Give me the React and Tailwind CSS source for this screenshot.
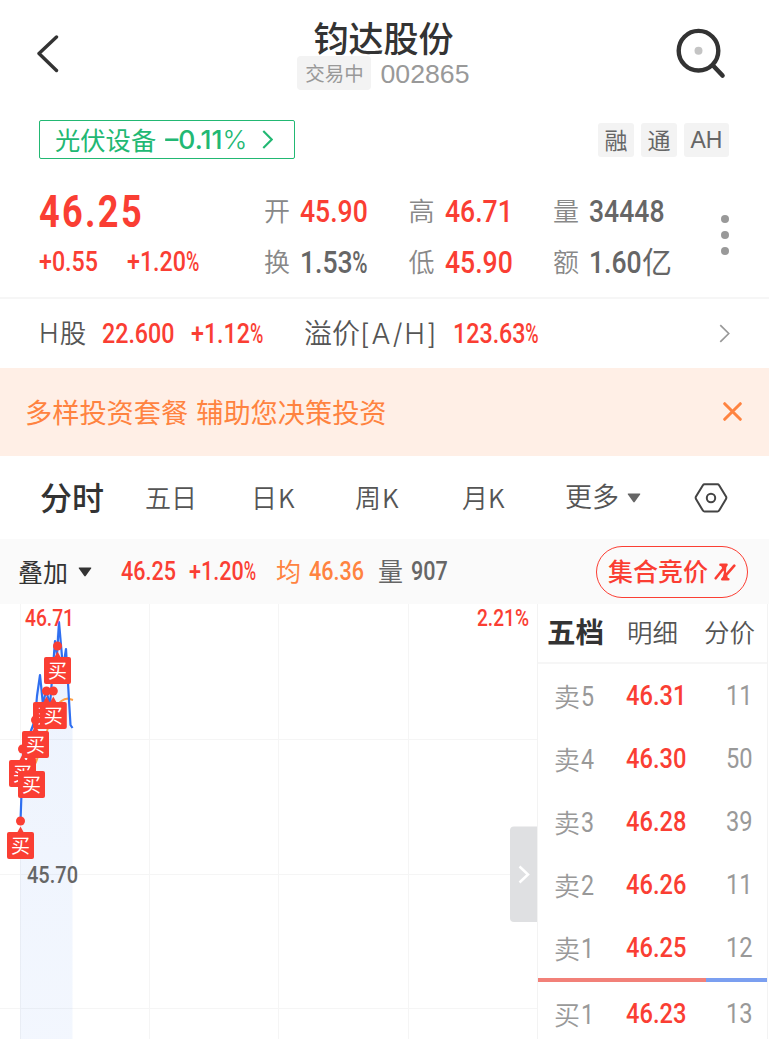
const SANS = "font-['Noto_Sans_CJK_SC',sans-serif]";

const stats = [
  [
    { label: "开", value: "45.90", red: true },
    { label: "换", value: "1.53%" },
  ],
  [
    { label: "高", value: "46.71", red: true },
    { label: "低", value: "45.90", red: true },
  ],
  [
    { label: "量", value: "34448" },
    { label: "额", value: "1.60", unit: "亿" },
  ],
];

const asks = [
  { label: "卖5", price: "46.31", volume: "11" },
  { label: "卖4", price: "46.30", volume: "50" },
  { label: "卖3", price: "46.28", volume: "39" },
  { label: "卖2", price: "46.26", volume: "11" },
  { label: "卖1", price: "46.25", volume: "12" },
];

const bids = [{ label: "买1", price: "46.23", volume: "13" }];

// x / y of the trade dot, the badge hangs below it
const trades = [
  { x: 57.5, y: 646 },
  { x: 46.5, y: 691 },
  { x: 53.3, y: 691 },
  { x: 22.5, y: 749 },
  { x: 35.5, y: 720 },
  { x: 31.5, y: 760 },
  { x: 20.5, y: 821 },
];

// Narrow figures: the glyphs are squeezed inside a box of fixed width
const Num = ({ className, children }) => {
  const percent = children.endsWith("%");
  return (
    <span className={`block shrink-0 whitespace-nowrap font-[Roboto,sans-serif] ${className}`}>
      <span className="inline-block origin-left scale-x-[.83]">
        {percent ? children.slice(0, -1) : children}
        {percent && <span className="inline-block origin-left scale-x-[.78]">%</span>}
      </span>
    </span>
  );
};

const Chevron = ({ className }) => (
  <svg className={className} viewBox="0 0 10 18" fill="none" stroke="currentColor">
    <path d="M1 1l8 8-8 8" />
  </svg>
);

const Caret = ({ className }) => (
  <svg className={className} viewBox="0 0 14 10" fill="currentColor">
    <path d="M1.3.5h11.4q1 0 .4.9L7.7 9q-.7.8-1.4 0L.9 1.4Q.3.5 1.3.5z" />
  </svg>
);

const Header = () => (
  <header className="flex h-[100px] items-start justify-between pl-[37px] pr-[42px]">
    <svg className="mt-[34px] h-10 w-[22px]" viewBox="0 0 22 40" fill="none" stroke="#333" strokeWidth="3.4" strokeLinecap="round" strokeLinejoin="round">
      <path d="M19.5 3L2 19.5 19.5 36.5" />
    </svg>
    <div className="ml-[33px] flex flex-col items-center">
      <h1 className="mt-[17px] h-10 text-[35px] font-medium leading-[40px] text-[#333]">钧达股份</h1>
      <div className="-mt-px flex h-[34px] items-center">
        <span className="h-[34px] w-[74px] rounded bg-[#f3f3f3] text-center text-[19.5px] leading-[33px] text-[#999]">交易中</span>
        <span className="ml-[9px] pt-0.5 font-['Liberation_Sans',sans-serif] text-[26.7px] text-[#999]">002865</span>
      </div>
    </div>
    <svg className="mt-7 h-[52px] w-[52px]" viewBox="0 0 52 52" fill="none">
      <circle cx="23.5" cy="22.7" r="19.8" stroke="#333" strokeWidth="4.4" />
      <circle cx="23.5" cy="22.7" r="4" fill="#c4c4c4" />
      <path d="M38 37.5L47.5 47.5" stroke="#333" strokeWidth="4.6" strokeLinecap="round" />
    </svg>
  </header>
);

const Tags = () => (
  <div className="flex h-[82px] items-start justify-between pl-[39px] pr-10 pt-5">
    <div className="flex h-[39px] w-[256px] items-center rounded-[2px] border border-[#22b873] pl-[15px] text-[#22b873]">
      <span className="w-[110px] whitespace-nowrap text-[25.3px] leading-[37px]">光伏设备</span>
      <span className="w-[97px] whitespace-nowrap font-[Inter,sans-serif] text-[26px] font-medium leading-[37px]">
        <span className="inline-block origin-left scale-x-[1.02]">–0.11<span className="font-light">%</span></span>
      </span>
      <Chevron className="h-[19px] w-[11px] stroke-2" />
    </div>
    <div className="mt-[3px] flex gap-[7px] text-[23px] leading-[33px] text-[#666]">
      <span className="h-[34px] w-9 rounded-[3px] bg-[#f3f3f3] text-center">融</span>
      <span className="h-[34px] w-9 rounded-[3px] bg-[#f3f3f3] text-center">通</span>
      <span className="h-[34px] w-[45px] rounded-[3px] bg-[#f3f3f3] text-center font-['Liberation_Sans',sans-serif] leading-[35px]">AH</span>
    </div>
  </div>
);

const Quote = () => (
  <section className="flex h-[117px] border-b-2 border-[#f6f6f6] pl-[39px] text-[#fa3e33]">
    <div className="w-[225px]">
      <Num className="mt-[8px] h-[46px] text-[43.5px] font-bold leading-[46px] tracking-[2.8px]">46.25</Num>
      <div className="mt-[9px] flex text-[28px] font-medium leading-[34px]">
        <Num className="w-[88px]">+0.55</Num>
        <Num className="w-20">+1.20%</Num>
      </div>
    </div>
    {stats.map((column, i) => (
      <div className="w-[144.5px] pt-[9px]" key={i}>
        {column.map((item) => (
          <div className="mb-[11px] flex h-10 items-center" key={item.label}>
            <span className="w-[36px] pb-[3px] text-[26px] font-[350] leading-[37px] text-[#888]">{item.label}</span>
            <Num className={`text-[32px] font-medium leading-10 ${item.red ? "" : "text-[#666]"} ${item.unit ? "w-[53px]" : ""}`}>
              {item.value}
            </Num>
            {item.unit && <span className="pb-[3px] text-[30px] leading-[37px] text-[#666]">{item.unit}</span>}
          </div>
        ))}
      </div>
    ))}
    <div className="ml-[23px] mt-[33px] flex flex-col gap-2">
      <i className="size-2 rounded-full bg-[#999]" />
      <i className="size-2 rounded-full bg-[#999]" />
      <i className="size-2 rounded-full bg-[#999]" />
    </div>
  </section>
);

const HShare = () => (
  <section className="flex h-[69px] items-center pl-[39px] text-[28px] font-medium text-[#fa3e33]">
    <span className="w-[63px] whitespace-nowrap pb-0.5 text-[26.5px] font-[350] text-[#555]">
      <span className="mr-px font-[Inter,sans-serif] font-light">H</span>股
    </span>
    <Num className="w-[89px]">22.600</Num>
    <Num className="w-[113px]">+1.12%</Num>
    <span className="w-[149px] whitespace-nowrap pb-0.5 text-[28px] font-[350] text-[#555]">
      溢价<span className="font-[Inter,sans-serif] font-light tracking-[1.8px]">[A/H]</span>
    </span>
    <Num className="w-[266px]">123.63%</Num>
    <Chevron className="h-[19px] w-[11px] stroke-[1.6] text-[#999]" />
  </section>
);

const Banner = () => (
  <div className="flex h-[88px] items-center justify-between bg-[#ffefe6] pb-px pl-[25px] pr-[27px] text-[#ff8340]">
    <span className="text-[27.2px] [word-spacing:2px]">多样投资套餐 辅助您决策投资</span>
    <svg className="h-[19px] w-[19px]" viewBox="0 0 19 19" stroke="currentColor" strokeWidth="3" strokeLinecap="round">
      <path d="M1.7 1.7l15.6 15.6M17.3 1.7L1.7 17.3" />
    </svg>
  </div>
);

const Tabs = () => (
  <nav className="flex h-[83px] items-center pl-10 text-[26px] font-[350] text-[#555] [&>span]:pb-[3px]">
    <span className="w-[105px] text-[32px] font-medium text-[#333]">分时</span>
    <span className="w-[106px]">五日</span>
    <span className="w-[104px] tracking-[1px]">日K</span>
    <span className="w-[107px] tracking-[1px]">周K</span>
    <span className="w-[103px]">月K</span>
    <span className="w-[62px] text-[27px]">更多</span>
    <Caret className="h-[10px] w-[14px] text-[#666]" />
    <svg className="ml-[53px] h-[30px] w-[34px]" viewBox="0 0 34 30" fill="none" stroke="#444" strokeWidth="2">
      <path d="M10.5 1.2h13q1 0 1.6 1L32 13.6q.7 1.2 0 2.5l-6.9 11.5q-.6 1-1.6 1h-13q-1 0-1.6-1L2 16.1q-.7-1.3 0-2.5L8.9 2.2q.6-1 1.6-1z" />
      <circle cx="17" cy="15" r="4.2" />
    </svg>
  </nav>
);

const Overlay = () => (
  <div className="flex h-[65px] items-center bg-[#fafafa] pl-[18px] text-[25px] font-medium text-[#fa3e33]">
    <span className="w-[60px] font-normal text-[#333]">叠加</span>
    <Caret className="mr-[29px] h-[10px] w-[14px] text-[#333]" />
    <Num className="w-[68px] text-[26px]">46.25</Num>
    <Num className="w-[87px] text-[26px]">+1.20%</Num>
    <span className="w-[33px] pb-0.5 font-normal text-[#ff8340]">均</span>
    <Num className="w-[69px] text-[26px] text-[#ff8340]">46.36</Num>
    <span className="w-[33px] pb-0.5 font-normal text-[#666]">量</span>
    <Num className="w-[185px] text-[26px] text-[#666]">907</Num>
    <button className="flex h-[52px] w-[152px] items-center rounded-full border border-[#fa3e33] pl-[11px]">
      <span className="whitespace-nowrap pb-0.5">集合竞价</span>
      <svg className="ml-[6px] h-[18px] w-[22px]" viewBox="0 0 22 18" fill="none" stroke="currentColor" strokeWidth="2.6" strokeLinecap="round" strokeLinejoin="round">
        <path d="M6.5 1.7H12.5L1.7 15.3M20.3 2.7L8.3 16.3H14.3" />
        <path d="M6.500 1.700H12.500L12 9l2.300 7.300H8.300L10 9z" fill="currentColor" stroke="none" />
      </svg>
    </button>
  </div>
);

const Chart = () => (
  <svg className="block h-[435px] w-[537px] shrink-0" viewBox="0 604 537 435">
    <defs>
      <linearGradient id="area" x1="0" y1="0" x2="0" y2="1">
        <stop offset="0" stopColor="#3377ee" stopOpacity=".09" />
        <stop offset="1" stopColor="#3377ee" stopOpacity=".06" />
      </linearGradient>
    </defs>
    <path d="M20.5 604V1039M149.5 604V1039M278.5 604V1039M408.5 604V1039M0 739.5H537M0 874.5H537M0 1008.5H537" stroke="#f5f5f5" />
    <path d="M20 821L24 755L35 720L40 675L45 693L50 690L55 641L59 622L64 668L66 649L70 725L72.5 728V1039H20z" fill="url(#area)" />
    <path d="M21 790L36 762L47 731L55 708Q61 699 68 698.5L73 700" fill="none" stroke="#ff9f43" strokeWidth="2" />
    <path d="M20.5 821L23 752L35 720L37 696L40 675L43 705L46 690L50 705L55 641L57 655L59 622L63 668L66 649L69 700L70.5 725L72.5 728" fill="none" stroke="#2f6ff0" strokeWidth="2.2" strokeLinejoin="round" />
    {trades.map(({ x, y }) => (
      <g key={`${x}-${y}`} fill="#fa3e33">
        <circle cx={x} cy={y} r="4.5" />
        <path d={`M${x - 3} ${y + 11}L${x} ${y + 5.5}L${x + 3} ${y + 11}z`} />
        <rect x={x - 13.5} y={y + 11} width="27" height="27" rx="2" />
        <text x={x} y={y + 31.5} fill="#fff" fontSize="19" textAnchor="middle" className={SANS}>买</text>
      </g>
    ))}
    <g className="font-[Roboto,sans-serif] font-medium" fontSize="24">
      <text x="25" y="626" textLength="49" lengthAdjust="spacingAndGlyphs" fill="#fa3e33">46.71</text>
      <text x="477" y="626" textLength="52" lengthAdjust="spacingAndGlyphs" fill="#fa3e33">2.21%</text>
      <text x="27" y="883" textLength="51" lengthAdjust="spacingAndGlyphs" fill="#666">45.70</text>
    </g>
    <path d="M514 826.5H537V922H514q-4 0-4-4V830.5q0-4 4-4z" fill="#dfe0e2" />
    <path d="M519.5 866.5l8.5 8-8.5 8" fill="none" stroke="#fff" strokeWidth="2.5" />
  </svg>
);

const Level = ({ label, price, volume }) => (
  <li className="flex h-[63px] items-center pl-4 text-[#999]">
    <span className="w-[27px] pb-[3px] text-[26px] font-[350]">{label[0]}</span>
    <Num className="w-[45px] text-[28px]">{label[1]}</Num>
    <Num className="w-[100px] text-[28.5px] font-medium text-[#fa3e33]">{price}</Num>
    <Num className="text-[28.5px]">{volume}</Num>
  </li>
);

const OrderBook = () => (
  <aside className="w-[231px] border-x border-[#f3f3f3]">
    <div className="flex h-[60px] items-center border-b-2 border-[#f6f6f6] pl-[9px] text-[25.5px] font-[350] text-[#555] [&>span]:pb-[4px]">
      <span className="w-[80px] text-[28.5px] font-bold text-[#333]">五档</span>
      <span className="w-[77px]">明细</span>
      <span>分价</span>
    </div>
    <ul className="pt-px">
      {asks.map((level) => (
        <Level key={level.label} {...level} />
      ))}
    </ul>
    <div className="-mt-0.5 mb-px flex h-1">
      <div className="w-[168px] bg-[#f28078]" />
      <div className="flex-1 bg-[#7b9ff0]" />
    </div>
    <ul>
      {bids.map((level) => (
        <Level key={level.label} {...level} />
      ))}
    </ul>
  </aside>
);

const App = () => {
  return (
    <div className={`h-[1039px] w-[769px] overflow-hidden bg-white ${SANS}`}>
      <Header />
      <Tags />
      <Quote />
      <HShare />
      <Banner />
      <Tabs />
      <Overlay />
      <div className="flex">
        <Chart />
        <OrderBook />
      </div>
    </div>
  );
};

export default App;
